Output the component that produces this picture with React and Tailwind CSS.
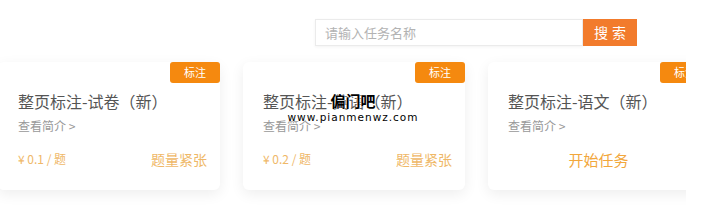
import React from "react"

const cards = [
  { title: "整页标注-试卷（新）", price: "¥ 0.1 / 题", status: "题量紧张" },
  { title: "整页标注-英语（新）", price: "¥ 0.2 / 题", status: "题量紧张" },
  { title: "整页标注-语文（新）", start: true },
]

const TaskCard = ({ card }) => {
  return (
    <div className="relative w-[222px] h-[128px] shrink-0 rounded-md bg-white shadow-[0_4px_14px_rgba(0,0,0,0.07)] pl-[20px] pr-[13px]">
      <div className="absolute right-0 top-0 w-[50px] h-[21px] rounded-[3px] bg-[#f5890f] text-white text-[11px] flex items-center justify-center">
        标注
      </div>
      <div className="pt-[29px] text-[16px] leading-[20px] text-[#555]">{card.title}</div>
      <div className="mt-[8px] text-[12px] leading-[14px] text-[#999]">查看简介 &gt;</div>
      {card.start ? (
        <div className="mt-[18px] pr-[8px] text-center text-[15px] leading-[18px] text-[#f2a73c]">开始任务</div>
      ) : (
        <div className="mt-[18px] flex items-center justify-between text-[#efb868]">
          <span className="text-[12px] leading-[16px]">{card.price}</span>
          <span className="text-[14px] leading-[16px]">{card.status}</span>
        </div>
      )}
    </div>
  )
}

export default function App() {
  return (
    <div className="relative w-[704px] h-[222px] bg-white overflow-hidden" style={{ fontFamily: '"Noto Sans CJK SC", "Noto Sans", sans-serif' }}>
      <div className="flex pt-[19px] pl-[315px]">
        <div className="w-[268px] h-[27px] border border-[#ebebeb] shadow-[0_1px_3px_rgba(0,0,0,0.05)] flex items-center pl-[9px] text-[13px] text-[#b3b3b3]">
          请输入任务名称
        </div>
        <button className="w-[54px] h-[27px] bg-[#f27b2c] text-white text-[14px] tracking-[4px] pl-[4px]">搜索</button>
      </div>
      <div className="w-[686px] overflow-hidden pt-[16px] pb-[20px]">
        <div className="flex gap-[23px] ml-[-2px]">
          {cards.map((c, i) => (
            <TaskCard key={i} card={c} />
          ))}
        </div>
      </div>
      <div className="absolute left-[296px] top-[91px] w-[114px] flex flex-col items-center text-black [text-shadow:0_0_2px_#fff,0_0_2px_#fff]">
        <div className="text-[15px] leading-[19px] font-bold">偏门吧</div>
        <div className="text-[10.5px] leading-[14px] tracking-[1px]" style={{ fontFamily: '"DejaVu Sans", sans-serif' }}>www.pianmenwz.com</div>
      </div>
    </div>
  )
}
